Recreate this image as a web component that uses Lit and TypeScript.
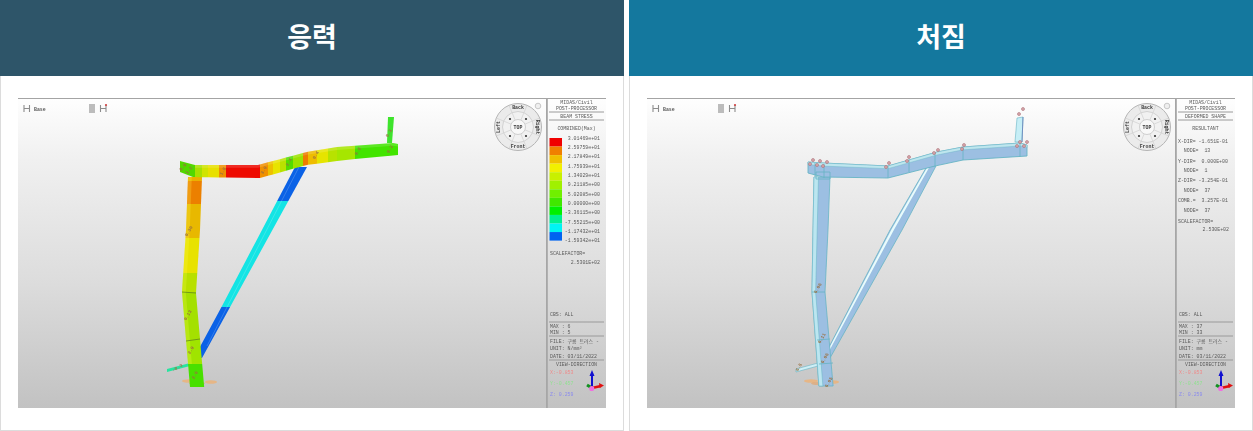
import { LitElement, html, css, svg } from "lit";
import { customElement } from "lit/decorators.js";

type P = [number, number];
const at = (e: P[], s: number, ax: 0 | 1) => {
  const o = ax === 0 ? 1 : 0;
  for (let i = 0; i < e.length - 1; i++) {
    const a = e[i], b = e[i + 1];
    if (s <= b[ax] || i === e.length - 2) return a[o] + ((b[o] - a[o]) * (s - a[ax])) / (b[ax] - a[ax]);
  }
  return 0;
};
/* polygon between two edges, cut from s0 to s1 along the axis */
const band = (a: P[], b: P[], s0: number, s1: number, ax: 0 | 1) => {
  const cuts = [s0, ...[...a, ...b].map((p) => p[ax]).filter((v) => v > s0 && v < s1), s1].sort((x, y) => x - y);
  const pt = (e: P[], s: number) => (ax === 0 ? `${s},${at(e, s, 0)}` : `${at(e, s, 1)},${s}`);
  return [...cuts.map((s) => pt(a, s)), ...cuts.reverse().map((s) => pt(b, s))].join(" ");
};
const mix = (a: P[], b: P[], t: number, ax: 0 | 1): P[] => {
  const o = ax === 0 ? 1 : 0;
  return a.map((p) => {
    const r: P = [p[0], p[1]];
    r[o] = p[o] + (at(b, p[ax], ax) - p[o]) * t;
    return r;
  });
};

const ox = 629;

const tag = (x: number, y: number, t: string, rot = -60, fill = "#9a7040") =>
  svg`<text class="tag" x=${x} y=${y} fill=${fill} transform="rotate(${rot} ${x} ${y})">${t}</text>`;

const line = (x1: number, y: number, x2: number) => svg`<line x1=${x1} y1=${y} x2=${x2} y2=${y} stroke="#9a9a9a" stroke-width="1"></line>`;

const spokes = (cx: number, cy: number) =>
  [22.5, 67.5, 112.5, 157.5, 202.5, 247.5, 292.5, 337.5].map((deg) => {
    const r = (deg * Math.PI) / 180;
    return svg`<line x1=${cx + Math.cos(r) * 7.5} y1=${cy + Math.sin(r) * 7.5} x2=${cx + Math.cos(r) * 23} y2=${cy + Math.sin(r) * 23} stroke="#d4d4d4" stroke-width=".8"></line>`;
  });

/* view chrome shared by both pictures; dx moves it to the second picture */
const chrome = (dx: number) => svg`
  <rect x=${18 + dx} y="98" width="588" height="1" fill="#a4a4a4"></rect>
  <rect x=${546 + dx} y="98" width="1.8" height="310" fill="#a6a6a6"></rect>
  <g stroke="#8c8c8c" stroke-width="1.1" fill="none">
    <path d="M${24 + dx} 105v7M${29.5 + dx} 105v7M${24 + dx} 108.5h5.5"></path>
    <path d="M${100.5 + dx} 105v7M${106 + dx} 105v7M${100.5 + dx} 108.5h5.5"></path>
  </g>
  <circle cx=${106 + dx} cy="105" r="1.1" fill="#d04040"></circle>
  <rect x=${89 + dx} y="104" width="6" height="9" fill="#bcbcbc"></rect>
  <text class="t" x=${34 + dx} y="110.5" font-weight="700">Base</text>
  <circle cx=${518 + dx} cy="127" r="23.5" fill="#ebebeb" stroke="#b4b4b4"></circle>
  <circle cx=${518 + dx} cy="127" r="15.5" fill="#f1f1f1" stroke="#d2d2d2"></circle>
  ${spokes(518 + dx, 127)}
  <circle cx=${518 + dx} cy="127" r="7.5" fill="#f8f8f8" stroke="#cfcfcf"></circle>
  <circle cx=${538 + dx} cy="106" r="2.8" fill="#efefef" stroke="#c6c6c6"></circle>
  <g fill="#333">
    <circle cx=${510 + dx} cy="119" r="1.1"></circle><circle cx=${526 + dx} cy="119" r="1.1"></circle>
    <circle cx=${510 + dx} cy="136" r="1.1"></circle><circle cx=${526 + dx} cy="136" r="1.1"></circle>
  </g>
  <g class="c lbl">
    <text x=${518 + dx} y="109">Back</text>
    <text x=${518 + dx} y="148">Front</text>
    <text x=${518 + dx} y="129">TOP</text>
    <text x=${500 + dx} y="127" transform="rotate(-90 ${500 + dx} 127)">Left</text>
    <text x=${536 + dx} y="127" transform="rotate(90 ${536 + dx} 127)">Right</text>
  </g>
  <g class="c">
    <text x=${576.5 + dx} y="103.5">MIDAS/Civil</text>
    <text x=${576.5 + dx} y="110">POST-PROCESSOR</text>
    <text x=${576.5 + dx} y="366">VIEW-DIRECTION</text>
  </g>
  ${line(549 + dx, 112, 604 + dx)}${line(549 + dx, 120, 604 + dx)}
  ${line(549 + dx, 322, 604 + dx)}${line(549 + dx, 336, 604 + dx)}${line(549 + dx, 360, 604 + dx)}
  <text class="t" x=${550 + dx} y="316">CBS: ALL</text>
  <text class="t" x=${550 + dx} y="342.5">FILE: 구름 트러스 -</text>
  <text class="t" x=${550 + dx} y="357.5">DATE: 03/11/2022</text>
  <text class="xr" x=${550 + dx} y="373.5">X:-0.853</text>
  <text class="yg" x=${550 + dx} y="384.5">Y:-0.457</text>
  <text class="zb" x=${550 + dx} y="395.5">Z: 0.259</text>
  <path d="M${592 + dx} 388V374" stroke="#1010d0" stroke-width="2"></path>
  <path d="M${592 + dx} 370l-2.5 6h5z" fill="#1010d0"></path>
  <path d="M${592 + dx} 388l9-2" stroke="#e01010" stroke-width="2.4"></path>
  <path d="M${604 + dx} 385.5l-5-2.5 .6 5z" fill="#e01010"></path>
  <path d="M${592 + dx} 388l-5-3" stroke="#109020" stroke-width="3"></path>
  <circle cx=${591.7 + dx} cy="388.5" r="2.6" fill="#f070e0"></circle>
`;

const supports = (dx: number) => svg`
  <ellipse cx=${189 + dx} cy="381" rx="7" ry="1.8" fill="#f0b070" opacity=".75"></ellipse>
  <ellipse cx=${211 + dx} cy="382" rx="6" ry="1.8" fill="#f0b070" opacity=".75"></ellipse>
  <ellipse cx=${197 + dx} cy="383.5" rx="8" ry="1.6" fill="#e8a060" opacity=".6"></ellipse>
`;

/* ---------- stress picture ---------- */
const sTop: P[] = [[180, 161], [195, 165], [258, 165], [307, 152], [337, 147], [393, 143], [398, 144]];
const sBot: P[] = [[180, 172], [193, 177], [260, 178], [307, 165], [337, 161], [355, 159], [398, 155]];
const sStops: [number, string][] = [
  [180, "#52d800"], [195, "#a8e000"], [202, "#d0e400"], [208, "#e8e000"], [219, "#ee9000"], [226, "#ee0a00"],
  [260, "#f09000"], [268, "#eec000"], [273, "#e8e400"], [280, "#b8e200"], [286, "#52dc00"], [293, "#9ce200"],
  [303, "#ee7c00"], [308, "#eebc00"], [317, "#e6e400"], [328, "#b8e200"], [337, "#a6e600"], [355, "#42e400"], [398, ""],
];
const cL: P[] = [[188, 177], [186, 230], [182, 292], [190, 387]];
const cR: P[] = [[202, 178], [200, 230], [196, 293], [204, 385]];
const cStops: [number, string][] = [
  [177, "#ecb000"], [181, "#ec8000"], [204, "#e8b800"], [238, "#e8e200"], [273, "#b8e000"], [292, "#a4e000"], [340, "#a0e400"], [364, "#48e000"], [387, ""],
];
const dL: P[] = [[295, 167], [222, 306], [201, 345]];
const dR: P[] = [[307, 167], [229, 309], [202, 358]];
const dStops: [number, string][] = [[167, "#0b62e6"], [201, "#14e4e4"], [307, "#0b62e6"], [358, ""]];

const stress = () => svg`
  ${supports(0)}
  <polygon points="388,117 394,117 392,143 387,143" fill="#3ee42c"></polygon>
  ${dStops.slice(0, -1).map(([s, c], i) => svg`<polygon points=${band(dL, dR, s, dStops[i + 1][0], 1)} fill=${c}></polygon>`)}
  <line x1="299" y1="167" x2="207" y2="346" stroke="#ffffff" stroke-opacity=".18" stroke-width="1"></line>
  <polygon points="167,369 190,363 190,366 167,372" fill="#28e4a0"></polygon>
  ${cStops.slice(0, -1).map(([s, c], i) => svg`<polygon points=${band(cL, cR, s, cStops[i + 1][0], 1)} fill=${c}></polygon>`)}
  <polygon points=${band(cL, mix(cL, cR, 0.27, 1), 177, 364, 1)} fill="#ffff50" fill-opacity=".22"></polygon>
  ${sStops.slice(0, -1).map(([s, c], i) => svg`<polygon points=${band(sTop, sBot, s, sStops[i + 1][0], 0)} fill=${c}></polygon>`)}
  <polygon points=${band(sTop, mix(sTop, sBot, 0.22, 0), 195, 398, 0)} fill="#fff" fill-opacity=".14"></polygon>
  <path d="M182 292l14 1M186 341l14-2" stroke="#5c7a20" stroke-width=".7" fill="none"></path>
  ${tag(190, 232, "0.30")}${tag(189, 316, "0.13")}${tag(192, 351, "2.9")}${tag(196, 376, "2.0")}
  ${tag(178, 369, "-0.3", -30, "#b05050")}
  ${tag(184, 168, "0.9", -50)}${tag(190, 171, "1.2", -50)}${tag(224, 172, "1.8")}${tag(265, 171, "3.0")}
  ${tag(290, 163, "2.4")}${tag(317, 156, "0.4")}${tag(359, 152, "0.8")}${tag(390, 134, "0.3")}${tag(391, 150, "0.2")}
  ${["3.01469e+01", "2.59759e+01", "2.17849e+01", "1.75939e+01", "1.34029e+01", "9.21185e+00", "5.02085e+00", "0.00000e+00", "-3.36115e+00", "-7.55215e+00", "-1.17432e+01", "-1.59342e+01"].map(
    (t, i) => svg`<text class="r" x="600" y=${139.7 + i * 9.33}>${t}</text>`,
  )}
  ${["#f00000", "#f08000", "#f0c000", "#f2f000", "#c8f000", "#a0f000", "#70f000", "#40e800", "#00f000", "#00f090", "#00f4f4", "#0064f0"].map(
    (c, i) => svg`<rect x="549.5" y=${138 + i * 8.55} width="12.5" height="8.55" fill=${c}></rect>`,
  )}
  <g class="c"><text x="576.5" y="118">BEAM STRESS</text><text x="576.5" y="130">COMBINED(Max)</text></g>
  <text class="t" x="550" y="255">SCALEFACTOR=</text>
  <text class="r" x="600" y="264">2.5301E+02</text>
  <text class="t" x="550" y="327.5">MAX : 6</text>
  <text class="t" x="550" y="333.5">MIN : 5</text>
  <text class="t" x="550" y="349.5">UNIT: N/mm²</text>
  ${chrome(0)}
`;

/* ---------- deflection picture ---------- */
const bTop: P[] = [[808, 162], [823, 163], [888, 166], [937, 152], [963, 147], [1020, 143], [1027, 145]];
const bBot: P[] = [[808, 173], [823, 177], [888, 178], [935, 166], [963, 160], [1027, 156]];
const dcL: P[] = [[814, 177], [813, 230], [812, 292], [819, 387]];
const dcR: P[] = [[830, 177], [828, 230], [825, 292], [833, 385]];
const ddL: P[] = [[926, 168], [890, 230], [829, 347]];
const ddR: P[] = [[936, 166], [902, 230], [830, 358]];
const fill = "#9cbfe2";
const edge = "#66b4c4";
const marks: P[] = [
  [810, 164], [813, 160], [817, 165], [820, 161], [823, 166], [827, 162], [886, 167], [889, 163], [907, 161], [909, 157], [934, 153], [938, 150],
  [962, 149], [964, 145], [1017, 146], [1020, 142], [1024, 146], [1027, 142], [1019, 114], [1023, 109],
];

const deflect = () => svg`
  ${supports(ox - 7)}
  <polygon points="1017,118 1023,117 1022,142 1015,142" fill="#c6eef6" stroke=${edge} stroke-width=".6"></polygon>
  <line x1="1023" y1="117" x2="1022" y2="142" stroke="#6f8fc0" stroke-width="1"></line>
  <polygon points=${band(ddL, ddR, 166, 358, 1)} fill=${fill} stroke=${edge} stroke-width=".8"></polygon>
  <polygon points=${band(mix(ddL, ddR, 0.1, 1), mix(ddL, ddR, 0.32, 1), 168, 352, 1)} fill="#e8fcfc"></polygon>
  <polygon points="796,369 818,363 818,366 796,372" fill="#cfeff6" stroke=${edge} stroke-width=".6"></polygon>
  <polygon points=${band(dcL, dcR, 177, 386, 1)} fill=${fill} stroke=${edge} stroke-width=".8"></polygon>
  <polygon points=${band(dcL, mix(dcL, dcR, 0.28, 1), 177, 386, 1)} fill="#bce6f0" stroke=${edge} stroke-width=".5"></polygon>
  <polygon points=${band(bTop, bBot, 808, 1027, 0)} fill=${fill} stroke=${edge} stroke-width=".9"></polygon>
  <polygon points=${band(bTop, mix(bTop, bBot, 0.22, 0), 808, 1027, 0)} fill="#bfe6ee" stroke=${edge} stroke-width=".4"></polygon>
  <path d="M815 163v13M824 164v14M888 166v12M909 160v12M935 153v13M963 147v13M1020 143v14M812 292l13 0M817 340l13-1M819 364l14-1M816 172h14v7h-14z" stroke=${edge} stroke-width=".8" fill="none"></path>
  ${marks.map(([x, y]) => svg`<circle cx=${x} cy=${y} r="1.5" fill="#d8a8ac" stroke="#a86c74" stroke-width=".6"></circle>`)}
  ${tag(819, 289, "6.06", -60, "#a06070")}${tag(823, 339, "6.11", -60, "#a06070")}${tag(826, 359, "6.06", -60, "#a06070")}
  ${tag(830, 383, "6.05", -60, "#a06070")}${tag(800, 368, "6.5", -60, "#a06070")}
  <g class="c"><text x="1205.5" y="118">DEFORMED SHAPE</text><text x="1205.5" y="130">RESULTANT</text></g>
  ${[
    ["X-DIR= -1.651E-01", 143], ["  NODE=  13", 152], ["Y-DIR=  0.000E+00", 163], ["  NODE=  1", 172], ["Z-DIR= -3.254E-01", 182],
    ["  NODE=  37", 192], ["COMB.=  3.257E-01", 202], ["  NODE=  37", 212], ["SCALEFACTOR=", 223],
  ].map(([t, y]) => svg`<text class="t" x="1178" y=${y}>${t}</text>`)}
  <text class="r" x="1229" y="231">2.530E+02</text>
  <text class="t" x="1179" y="327.5">MAX : 37</text>
  <text class="t" x="1179" y="333.5">MIN : 33</text>
  <text class="t" x="1179" y="349.5">UNIT: mm</text>
  ${chrome(ox)}
`;

@customElement("app-root")
export class AppRoot extends LitElement {
  static styles = css`
    :host {
      display: block;
      font-family: "Noto Sans CJK KR", "Noto Sans", sans-serif;
    }
    .grid {
      display: grid;
      grid-template-columns: 1fr 1fr;
      gap: 5px;
    }
    .card {
      background: #fff;
      display: flex;
      flex-direction: column;
    }
    .head {
      height: 76px;
      padding-bottom: 5px;
      box-sizing: border-box;
      display: flex;
      align-items: center;
      justify-content: center;
      color: #fff;
      font-size: 27px;
      font-weight: 700;
    }
    .stress {
      background: #2e5569;
    }
    .defl {
      background: #14789e;
    }
    .body {
      border: 1px solid #dcdcdc;
      border-top: 0;
      padding: 22px 17px;
      height: 355px;
      box-sizing: border-box;
    }
    .shot {
      width: 588px;
      height: 310px;
      display: block;
      background: linear-gradient(#fefefe 0%, #f0f0f0 20%, #dcdcdc 60%, #c2c2c2 100%);
    }
    .soft {
      filter: blur(0.6px);
    }
    text {
      font-family: "Liberation Mono", "Noto Sans CJK KR", monospace;
      font-size: 4.9px;
      white-space: pre;
      fill: #5a5a5a;
    }
    .c text {
      text-anchor: middle;
    }
    .r {
      text-anchor: end;
    }
    .lbl text {
      font-weight: 700;
      fill: #3c3c3c;
    }
    .xr {
      fill: #ee8a8a;
    }
    .yg {
      fill: #90e090;
    }
    .zb {
      fill: #8a8aee;
    }
    .tag {
      font-size: 4.6px;
      font-weight: 700;
      text-anchor: middle;
      fill: #9a7040;
    }
  `;

  render() {
    return html`<div class="grid">
      <section class="card">
        <div class="head stress">응력</div>
        <div class="body">
          <svg class="shot" viewBox="18 98 588 310"><g class="soft">${stress()}</g></svg>
        </div>
      </section>
      <section class="card">
        <div class="head defl">처짐</div>
        <div class="body">
          <svg class="shot" viewBox="647 98 588 310"><g class="soft">${deflect()}</g></svg>
        </div>
      </section>
    </div>`;
  }
}
